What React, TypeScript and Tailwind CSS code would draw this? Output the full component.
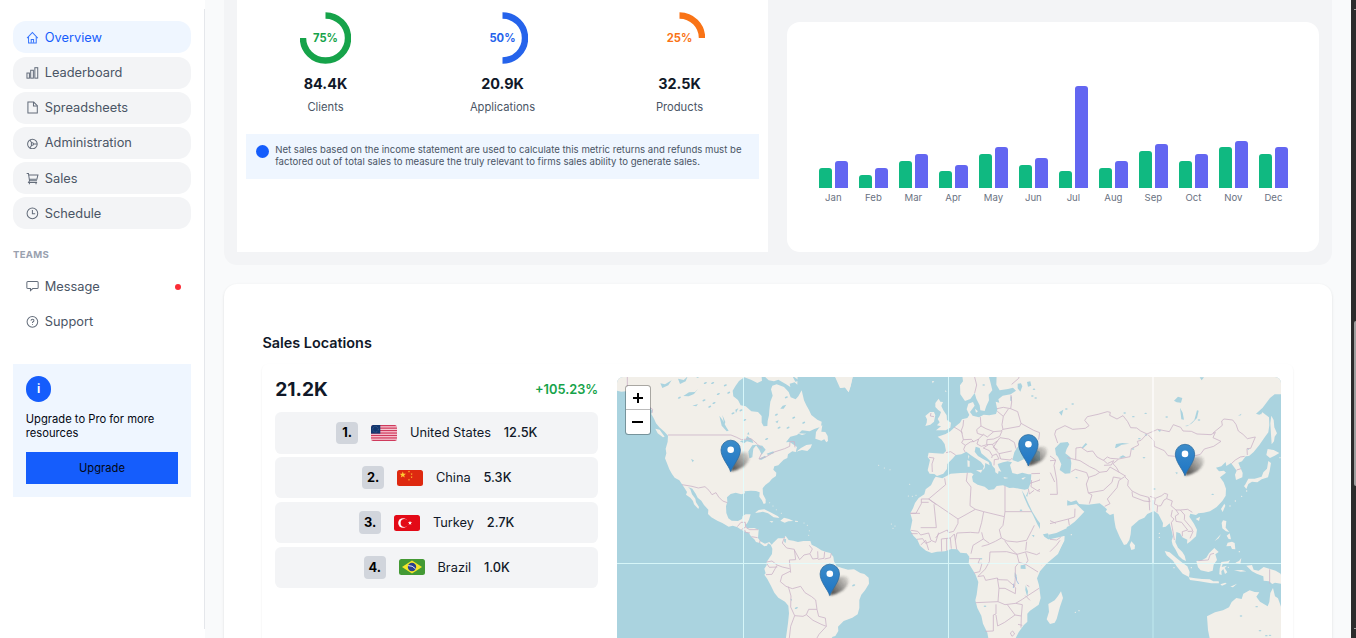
import React from "react";

type IconName = "home" | "bars" | "file" | "admin" | "cart" | "clock" | "message" | "help";

function Icon({ name }: { name: IconName }) {
  const shapes: Record<IconName, React.ReactNode> = {
    home: (
      <>
        <path d="M1 6.6 6 1.3l5 5.3" />
        <path d="M2.4 5.6v5.6h7.2V5.6" />
        <path d="M4.9 11V7.9h2.2V11" />
      </>
    ),
    bars: (
      <>
        <rect x="0.9" y="6.6" width="2.3" height="4.8" />
        <rect x="4.4" y="4" width="2.5" height="7.4" />
        <rect x="8.300" y="1.6" width="2.7" height="9.8" />
      </>
    ),
    file: (
      <>
        <path d="M1.8 1h5.4l3.4 3.4v6.8H1.8z" />
        <path d="M7 1v3.6h3.6" />
      </>
    ),
    admin: (
      <>
        <circle cx="6" cy="6.6" r="4.5" />
        <circle cx="6" cy="6.6" r="1.1" />
        <path d="M7.2 6.6h3.3M5.4 5.6 3.7 2.9M5.4 7.6l-1.7 2.7" />
      </>
    ),
    cart: (
      <>
        <path d="M0.6 1.4h1.7l1 6.9h7" />
        <path d="M2.5 2.8h8.7l-1 4H3.1" />
        <path d="M3.3 8.3 2.4 9.8h8" />
        <path d="M3.2 10.2v1.2M9.4 10.2v1.2" />
      </>
    ),
    clock: (
      <>
        <circle cx="6" cy="6" r="5" />
        <path d="M6 2.8V6.3h2.6" />
      </>
    ),
    message: <path d="M1.8 1.400h8.6q1 0 1 1v4.6q0 1-1 1H6.3L4.2 10V8H1.8q-1 0-1-1V2.400q0-1 1-1z" />,
    help: (
      <>
        <circle cx="6" cy="6.4" r="5" />
        <path d="M4.7 5.4q0-1.4 1.4-1.4t1.3 1.3Q7.4 6.200 6.100 6.700v.7M6.100 8.500v.7" />
      </>
    ),
  };
  return (
    <svg width="12.800" height="12.800" viewBox="0 0 12 12" fill="none" stroke="currentColor" strokeWidth="0.950" className="shrink-0 opacity-85">
      {shapes[name]}
    </svg>
  );
}

const navItems: { label: string; icon: IconName; active?: boolean }[] = [
  { label: "Overview", icon: "home", active: true },
  { label: "Leaderboard", icon: "bars" },
  { label: "Spreadsheets", icon: "file" },
  { label: "Administration", icon: "admin" },
  { label: "Sales", icon: "cart" },
  { label: "Schedule", icon: "clock" },
];

function Sidebar() {
  return (
    <aside className="flex w-[205px] shrink-0 flex-col bg-white py-[9px]">
      <div className="flex h-[621px] flex-col border-r border-gray-200 px-[13px] pt-[12.4px]">
        <nav className="flex flex-col gap-[3.2px]">
          {navItems.map((item) => (
            <a
              key={item.label}
              className={
                item.active
                  ? "flex h-8 items-center gap-[6.2px] rounded-[13px] bg-blue-50 px-[12.800px] text-[12.8px] text-blue-600"
                  : "flex h-8 items-center gap-[6.2px] rounded-[13px] bg-gray-100 px-[12.800px] text-[12.8px] text-gray-600"
              }
            >
              <Icon name={item.icon} />
              {item.label}
            </a>
          ))}
        </nav>
        <h3 className="mt-[19px] text-[9.6px] font-bold leading-[13px] tracking-[0.3px] text-gray-400">TEAMS</h3>
        <div className="mt-[9px] flex flex-col gap-[3.2px] text-[12.8px] text-gray-600">
          <a className="flex h-8 items-center gap-[6.2px] px-[12.800px]">
            <Icon name="message" />
            Message
            <span className="mr-[-3px] ml-auto mt-[1px] size-[6.4px] rounded-full bg-[#fb2c36]" />
          </a>
          <a className="flex h-8 items-center gap-[6.2px] px-[12.800px]">
            <Icon name="help" />
            Support
          </a>
        </div>
        <div className="mt-[26.900px] h-[133px] bg-blue-50 px-[12.800px] pt-[11.800px]">
          <div className="flex size-[25.6px] items-center justify-center rounded-full bg-[#155dfc] text-xs font-bold text-white">i</div>
          <p className="mt-[10px] text-[11.2px] leading-[14px] text-gray-950">Upgrade to Pro for more resources</p>
          <button className="mt-[12.200px] block h-8 w-full bg-[#155dfc] text-[11.2px] text-gray-950">Upgrade</button>
        </div>
      </div>
    </aside>
  );
}

const gauges = [
  { pct: 75, value: "84.4K", label: "Clients", stroke: "#16a34a", text: "text-[#16a34a]" },
  { pct: 50, value: "20.9K", label: "Applications", stroke: "#2563eb", text: "text-[#2563eb]" },
  { pct: 25, value: "32.5K", label: "Products", stroke: "#f97316", text: "text-[#f97316]" },
];

function Gauges() {
  return (
    <section className="w-[531px] bg-white px-[9.200px] pt-3">
      <div className="grid grid-cols-[177px_177px_177px] justify-center">
        {gauges.map((g) => (
          <div key={g.label} className="flex flex-col items-center">
            <div className="relative flex h-[52px] w-[51px] items-center justify-center">
              <svg className="absolute inset-0 size-full" viewBox="0 0 51 52" fill="none">
                <circle cx="25.500" cy="26" r="22.500" stroke={g.stroke} strokeWidth="6.400" pathLength="100" strokeDasharray={`${g.pct} 100`} transform="rotate(-90 25.500 26)" />
              </svg>
              <span className={`text-[11.2px] font-bold ${g.text}`}>{g.pct}%</span>
            </div>
            <div className="mt-[10px] text-[14.4px] font-bold leading-5 text-gray-900">{g.value}</div>
            <div className="mt-[5px] text-[11.2px] leading-4 text-gray-600">{g.label}</div>
          </div>
        ))}
      </div>
      <div className="mt-[19px] flex h-[45px] gap-[6.4px] bg-blue-50 px-[9.6px] pt-[10px]">
        <span className="mt-[1px] size-[13px] shrink-0 rounded-full bg-[#155dfc]" />
        <p className="whitespace-nowrap text-[9.6px] leading-[12px] text-gray-600">
          Net sales based on the income statement are used to calculate this metric returns and refunds must be
          <br />
          factored out of total sales to measure the truly relevant to firms sales ability to generate sales.
        </p>
      </div>
    </section>
  );
}

const months: [string, number, number][] = [
  ["Jan", 6, 8],
  ["Feb", 3.8, 6],
  ["Mar", 8, 10],
  ["Apr", 5, 6.8],
  ["May", 10, 12],
  ["Jun", 6.8, 8.8],
  ["Jul", 5, 30],
  ["Aug", 6, 8],
  ["Sep", 11, 13],
  ["Oct", 8, 10],
  ["Nov", 12, 13.8],
  ["Dec", 10, 12],
];

function BarChart() {
  return (
    <section className="mt-[22px] flex h-[230px] w-[532px] items-start justify-center rounded-[13px] bg-white pl-[0.800px] pt-[46px]">
      {months.map(([month, a, b]) => (
        <div key={month} className="flex w-10 flex-col items-center">
          <div className="flex h-[120px] items-end gap-[3.2px]">
            <div className="w-[12.8px] rounded-t-[3px] bg-[#10b981]" style={{ height: a * 3.4 }} />
            <div className="w-[12.8px] rounded-t-[3px] bg-[#6366f1]" style={{ height: b * 3.4 }} />
          </div>
          <span className="mt-[3px] text-[9.6px] leading-[13px] text-gray-500">{month}</span>
        </div>
      ))}
    </section>
  );
}

function Star({ x, y, r, fill }: { x: number; y: number; r: number; fill: string }) {
  const pts = Array.from({ length: 10 }, (_, i) => {
    const a = (Math.PI / 5) * i - Math.PI / 2;
    const q = i % 2 ? r * 0.4 : r;
    return `${(x + q * Math.cos(a)).toFixed(2)},${(y + q * Math.sin(a)).toFixed(2)}`;
  });
  return <polygon points={pts.join(" ")} fill={fill} />;
}

function Flag({ code }: { code: string }) {
  return (
    <svg width="26" height="16" viewBox="0 0 26 16" className="shrink-0 rounded-[2.500px]">
      {code === "us" && (
        <>
          <rect width="26" height="16" fill="#fbd5de" />
          {[0, 1, 2, 3, 4, 5, 6].map((i) => (
            <rect key={i} y={i * 2.46} width="26" height="1.300" fill="#cf3a5c" />
          ))}
          <rect width="9.300" height="8.600" fill="#12376f" />
          <circle cx="4.500" cy="4.300" r="2.800" fill="none" stroke="#5d76a3" strokeWidth="0.700" strokeDasharray="0.700 0.800" />
        </>
      )}
      {code === "cn" && (
        <>
          <rect width="26" height="16" fill="#de2910" />
          <Star x={5.8} y={4.8} r={3.4} fill="#fc3" />
          <Star x={12} y={1.6} r={1.1} fill="#fc3" />
          <Star x={14.6} y={4} r={1.1} fill="#fc3" />
          <Star x={14.6} y={7.2} r={1.1} fill="#fc3" />
          <Star x={12} y={9.8} r={1.1} fill="#fc3" />
        </>
      )}
      {code === "tr" && (
        <>
          <rect width="26" height="16" fill="#e30a17" />
          <circle cx="9" cy="8" r="4.800" fill="#fff" />
          <circle cx="10.500" cy="8" r="3.900" fill="#e30a17" />
          <Star x={16} y={8} r={2.3} fill="#fff" />
        </>
      )}
      {code === "br" && (
        <>
          <rect width="26" height="16" fill="#439934" />
          <path d="M3 8 13 1.500 23 8l-10 6.500z" fill="#f5e52a" />
          <circle cx="13" cy="8" r="4.200" fill="#2a3f8f" />
          <path d="M9.200 6.600q4.300-.3 7.300 3.200" fill="none" stroke="#fff" strokeWidth="0.900" />
        </>
      )}
    </svg>
  );
}

const countries = [
  { code: "us", name: "United States", value: "12.5K" },
  { code: "cn", name: "China", value: "5.3K" },
  { code: "tr", name: "Turkey", value: "2.7K" },
  { code: "br", name: "Brazil", value: "1.0K" },
];

const land = "#f2efe9";
const sea = "#aad3df";

function Americas() {
  return (
    <g transform="translate(612 370) scale(0.33333)">
      <path
        fill={land}
        d="M10 10V61L28 65 42 64 60 80 95 92 114 112 121 124 118 132 126 146 132 160 142 172 158 186 168 197 167 215 161 236 163 250 159 265 165 280 172 298 180 312 188 323 202 331 211 344 218 355 225 366 222 374 235 383 243 393 246 403 259 417 261 411 252 397 250 386 240 373 235 358 228 351 241 356 251 371 257 383 268 392 276 405 289 419 288 432 298 442 316 452 331 459 350 470 362 467 375 471 389 480 401 486 411 490 418 500 427 508 432 516 444 519 457 529 465 527 468 520 476 524 481 536 480 552 472 564 464 576 464 586 457 596 461 610 457 614 466 627 476 646 487 668 499 683 519 695 529 707 531 730 528 760 521 810H655L662 800 670 798 679 783 678 770 695 753 721 743 737 733 742 714 742 690 748 674 759 661 771 641 770 623 757 612 745 609 726 598 708 599 690 594 674 589 666 574 664 560 655 549 640 545 628 541 613 531 599 524 595 513 574 513 558 516 544 512 530 510 521 498 514 505 498 505 484 518 479 524 472 516 459 521 445 514 438 504 440 479 427 474 405 475 400 465 406 459 411 449 416 433 401 433 392 438 390 447 378 453 359 452 349 445 343 429 342 409 346 395 345 382 356 372 371 368 388 373 399 370 398 364 417 362 432 363 443 367 442 380 450 391 455 402 461 400 461 388 453 373 452 355 460 345 472 336 480 326 492 318 493 308 484 299 487 289 499 286 506 278 515 269 526 264 528 253 541 244 550 246 570 240 586 243 596 233 600 223 583 225 567 234 551 247 555 231 533 216 522 217 535 200 555 195 570 181 593 184 607 177 627 170 629 155 616 149 598 135 591 120 583 106 576 91 569 61 559 79 551 88 536 82 530 66 516 51 494 43 481 47 477 58 482 77 475 95 472 121 471 136 467 153 466 168 455 169 449 158 449 138 438 126 418 124 401 109 386 106 378 90 364 79 362 62 370 49 381 33 397 22 417 29 436 39 450 32 448 10Z"
      />
      <path fill={land} d="M448 10 470 31 486 34 499 29 521 42 535 51 533 41 548 37 556 44 557 10ZM665 10 675 34 684 54 698 52 710 67 716 47 724 10ZM612 186 625 168 631 166 628 185 640 186 647 198 648 213 643 217 637 208 628 212 610 206ZM130 176 143 179 158 200 153 202 137 190ZM428 429 440 420 457 418 478 428 498 439 502 444 485 442 468 430 453 425ZM505 452 516 443 531 447 544 453 529 454 518 458ZM472 453 484 454 480 458ZM549 452 558 453 557 456 549 455ZM556 190 583 191 570 195Z" />
      <g fill={sea}>
        <path d="M383 214 401 209 405 198 421 209 424 219 405 214 396 220ZM412 265 409 244 421 226 434 224 424 236 421 262ZM431 224 451 227 461 239 449 254 442 239ZM440 267 459 257 462 262 447 270ZM464 251 484 244 487 249 468 255ZM322 137 331 149 343 172 350 182 344 184 329 167ZM331 135 340 156 337 166ZM237 267 246 271 242 277ZM145 40 159 43 179 31 169 46 151 54ZM198 26 215 30 227 19 221 34 204 42ZM214 78 231 67 249 66 258 56 246 72 230 79ZM241 107 258 102 253 109ZM370 119 379 115 372 129ZM405 193 410 186 412 194ZM505 116 512 107 523 104 515 116ZM490 155 500 151 496 160ZM516 508 522 507 521 519 517 516ZM535 686 540 688 538 694ZM540 16 562 32 550 35Z" />
        {[[280, 39], [302, 39], [340, 46], [350, 68], [293, 110], [306, 99], [319, 72], [387, 121], [398, 150], [363, 130], [276, 91], [493, 134], [545, 143], [575, 158], [501, 173], [528, 173], [464, 207], [523, 82], [202, 83], [258, 20], [553, 714], [725, 646]].map(([x, y]) => (
          <ellipse key={`${x}-${y}`} cx={x} cy={y} rx="5" ry="2.500" transform={`rotate(-25 ${x} ${y})`} />
        ))}
      </g>
      <g fill={land}>
        {[[473, 398], [483, 408], [493, 419], [508, 430], [586, 466], [592, 482], [590, 496], [576, 459]].map(([x, y]) => (
          <circle key={`${x}-${y}`} cx={x} cy={y} r="1.500" />
        ))}
      </g>
      <g fill="none" stroke="#cdb6c9" strokeWidth="2.500" strokeLinejoin="round">
        <path d="M46 10V64M114 113 122 118 120 129M168 195H357L374 202 388 209 417 206 435 221 449 235M449 250 441 267 463 260 487 246 518 236 533 229 534 215 547 215 549 232M210 344 240 349 259 354 279 350 291 361 300 374 312 368 320 381 332 393 346 398M376 470 387 457 400 457 401 471 388 479M400 471 413 479 438 479M398 480 401 487 414 489M418 500 437 503M443 519 444 511" />
        <path d="M518 501 511 519 524 534 547 538 551 569 532 570 536 608M547 540 563 569 576 555 594 551 601 537 592 526M594 552 602 567 618 565 617 544M618 568 636 565 638 545M638 567 655 563 658 550M464 576 480 573 495 585 511 591 533 596M464 580 472 592 496 591M462 614 480 613 495 586M534 604 510 616 505 635 522 649 541 656 566 649 579 668 599 680 611 690 615 718M529 650 537 678 536 711 548 737 573 739 583 734 590 718 615 718M583 734 603 751 630 764 643 769 640 744 620 739 615 718M548 737 536 769 532 804M643 769 621 793 615 804" />
      </g>
    </g>
  );
}

function EuropeAfrica() {
  return (
    <g transform="translate(830 370) scale(0.33333)">
      <path
        fill={land}
        d="M396 10 399 34 390 46 391 73 405 93 421 87 434 69 439 86 449 106 451 121 464 123 469 108 477 91 476 74 487 61 482 40 476 17V10H500L499 44 509 61 534 57 549 53 558 62 542 73 518 77 505 88 508 98 497 95 502 119 498 132 478 136 461 134 447 142 428 137 420 126 434 107 429 96 415 101 410 118 418 135 412 144 396 148 390 158 378 168 361 184 347 192 323 200 335 209 344 222 348 243 340 251 317 250 296 248 293 261 300 270 293 301 299 311 313 312 321 318 340 311 351 297 352 282 370 263 377 255 394 253 409 245 423 256 441 268 453 276 462 288 457 302 464 294 466 279 479 286 476 276 459 267 444 258 434 245 437 230 449 234 454 250 471 264 484 277 487 287 495 296 496 307 504 312 506 303 514 305 506 291 503 282 519 277 533 274 546 277 540 285 547 309 562 313 577 308 595 313 604 313 602 338 595 356 584 359 568 356 550 353 538 354 519 346 500 348 492 358 476 360 464 350 443 344 429 335 426 320 431 313 423 308 392 309 362 311 337 325 317 320 312 327 303 346 287 358 283 373 266 384 255 399 249 415 241 430 247 451 241 481 250 497 262 509 270 527 288 542 305 549 321 545 345 544 364 537 382 538 391 548 410 550 418 560 416 580 427 598 436 613 445 636 440 674 436 691 442 714 454 737 459 761 472 788 476 810H554L566 787 581 766 592 755 592 731 600 722 626 704 632 684 627 646 621 625 630 604 651 580 684 552 700 515 702 498 687 506 658 509 655 494 679 489 710 475 720 10Z"
      />
      <path fill={land} d="M10 10 23 34 32 54 46 52 56 66 62 48 71 10ZM326 86 316 99 316 111 324 119 333 126 329 137 323 147 329 157 321 166 333 169 318 181 347 181 361 173 363 158 351 150 350 136 340 121 334 108 339 96 331 95ZM300 126 312 126 316 136 312 155 301 164 286 168 290 158 291 148 286 138ZM412 271 419 273 419 290 413 290ZM414 255 418 259 416 268ZM438 301 457 299 453 308ZM520 321 535 324 524 326ZM574 325 588 321 579 329ZM346 60 350 65 346 66ZM306 33 313 34 308 40ZM435 116 444 124 438 128Z" />
      <path fill={sea} d="M547 270 553 247 560 235 576 217 590 224 604 218 610 235 631 246 644 268 611 275 583 267 564 276ZM604 219 625 213 623 231 610 227ZM575 360 586 379 595 400 607 425 623 451 640 472 655 492 658 510 643 500 622 463 609 435 594 408 583 383ZM588 378 595 362 592 380ZM572 586 586 584 587 597 572 596ZM554 607 560 615 559 628 554 620ZM587 646 594 664 592 681 586 660ZM563 41 573 40 577 49 571 65 563 55ZM591 36 601 34 604 47 594 50ZM605 496 613 495 612 502ZM541 79 546 80 545 94 541 92ZM675 227 690 222V266L679 254Z" />
      <g fill={sea}>
        {[[617, 84], [656, 92], [612, 58], [640, 62], [465, 709], [453, 566], [573, 421], [461, 45], [660, 27], [607, 78]].map(([x, y]) => (
          <ellipse key={`${x}-${y}`} cx={x} cy={y} rx="4" ry="2.200" />
        ))}
      </g>
      <g fill={land}>
        {[[146, 286], [163, 294], [180, 299], [239, 343], [235, 378], [247, 379], [258, 376], [184, 462], [195, 468], [189, 475]].map(([x, y]) => (
          <circle key={`${x}-${y}`} cx={x} cy={y} r="1.600" />
        ))}
      </g>
      <path d="M558 620 560 632 566 642M551 641 550 654" stroke="#83aee0" strokeWidth="2" fill="none" />
      <g fill="none" stroke="#cdb6c9" strokeWidth="2.500" strokeLinejoin="round">
        <path d="M434 69 440 45 431 10M570 10 566 25 545 43M543 75 545 96 542 116 520 112 501 116M542 116 563 125 573 160 611 181 629 188 626 209M502 124 520 139 516 164 519 178 569 169 573 160M520 139 535 117M451 141 453 168 468 176 491 185 513 183 519 178M401 150 399 168 394 181 400 209 424 208 431 215 446 207 460 193 472 201 491 185M372 171 392 183 397 190M453 168 440 179 442 190 460 196M348 248 362 245 377 255M400 209 395 218 406 226 401 238 406 247M406 226 421 216 432 214M297 262 312 264 306 282 307 306M446 207 441 222 454 229 470 224 471 209 491 207 509 199 516 183M471 224 488 223 503 212 510 203 536 207 553 217 558 236M474 225 460 234 478 242 487 257 485 264M487 223 498 241 507 251 512 267 541 270 547 264M487 257 499 252 507 267 493 269 492 286M503 212 490 232 503 240M507 251 545 243M303 129 301 138 312 140M630 248 654 256 673 261M650 266 657 280 658 301 636 310 604 311M650 269 667 270 670 285 682 292M658 301 661 320 684 360M636 310 630 330 600 340M605 330 603 350 622 362 647 349 661 320M595 356 598 372 612 361M622 362 656 371 684 368" />
        <path d="M344 325 347 344 296 387 384 447 384 460 371 484 355 488 352 480 326 492 317 504 M296 387H274V401L258 430H241M296 397H275M312 403 319 473H272M296 387 319 404M241 430H270M412 308 409 333 423 351 421 384 420 407 436 418 461 425 523 440 525 425V347M525 425H605M436 418 384 447M461 425 455 457 446 489 421 487 381 489 376 511M455 487 460 507 429 526 423 551M523 440 519 466 508 479 514 504 496 514 474 524 455 529M460 507 478 520M514 504 531 513 561 516 590 511 605 482 613 466M524 512 541 535 561 553 590 545 620 554 652 537 682 518M590 515 587 541M634 554V588M587 547 594 571 587 583 624 606M561 553 567 577 556 591 556 620 554 649 532 630 505 629 502 624 467 631 461 617 443 620M567 577 587 583M418 566H450L444 580 456 580 449 605 432 609M480 546 478 575 466 597 445 618M480 546 530 545 561 553M502 624 507 655 525 655 556 671 557 654 551 648M507 655 504 695 437 698M504 695 525 704 557 700 577 688 590 679 627 655M498 703 498 732 490 735V783L466 784M498 735 503 768 524 757 555 735 532 704M555 735 574 738 577 704 557 700M574 738 573 773M564 763 577 766M541 789 548 783 554 792 546 799ZM243 481 263 484 272 495 296 489 303 511 317 517 326 488M243 491H263M261 508 278 506 287 520 303 514M272 525 287 511 296 540M335 545 334 507 361 504 364 536M350 505V542M361 504 373 492 380 538M590 645 598 650M586 677 600 691" />
      </g>
    </g>
  );
}

function AsiaPacific() {
  return (
    <g transform="translate(1050 370) scale(0.33333)">
      <path
        fill={land}
        d="M-30 10H700V73H674L660 84 638 113 618 131 628 134 637 127 657 142 658 166 655 187 642 205 628 225 611 246 597 258 587 259 576 274 565 278 572 295 578 309 577 322 558 330 555 314 560 302 552 291 543 279 529 288 527 276 514 289 498 293 507 304 522 302 528 308 510 322 521 337 528 356 527 377 517 393 500 411 480 424 461 428 445 430 438 435 421 431 418 440 432 461 441 479 438 499 420 515 411 521 412 509 397 502 390 490 379 486 378 503 376 516 384 533 397 546 404 557 408 573 397 568 386 557 377 539 368 525 365 512 369 500 365 482 359 460 347 470 338 472 339 459 325 432 312 423 292 432 283 443 267 450 244 470 242 493 238 510 230 523 222 525 209 501 197 473 193 451 191 431 180 435 167 425 171 418 159 407 149 400 114 404 87 402 79 391 63 396 39 385 31 370 22 365 35 385 43 399 48 407 70 404 79 402 89 412 103 425 86 443 74 455 57 468 27 482-30 495Z"
      />
      <path fill={land} d="M-30 515 12 505 44 498 43 512 28 541 0 570-30 590ZM33 664 39 684 30 710 20 747 14 758 0 762-10 748-3 725-5 702 14 691 24 678ZM244 514 255 526 254 537 244 540 239 525ZM344 543 359 547 380 565 397 578 412 589 419 606 417 621 398 611 381 590 369 572 350 556ZM416 622 436 625 456 627 479 628 490 634 506 634 507 640 484 640 448 634 420 630ZM439 573 453 572 469 563 477 550 493 534 506 546 496 553 501 570 491 584 488 602 475 606 452 601 444 592ZM514 576 533 574 540 570 535 580 518 582 515 591 531 587 524 594 532 607 525 612 520 597 514 604 515 615 508 613 509 596ZM589 587 606 585 611 599 626 602 641 591 660 597 677 602 692 611 700 643 675 638 667 642 657 634 641 632 640 619 620 611 606 604ZM471 739 495 727 519 721 537 712 545 696 559 684 575 687 580 671 599 661 614 666 628 667 619 680 630 695 653 709 658 696 661 669 669 654 675 679 684 685 693 710 700 810H480L474 780ZM515 459 519 451 529 453 527 473 538 486 528 484 517 475ZM533 518 546 515 554 519 556 538 546 537 542 528 529 529ZM513 417 523 401 526 407 518 426ZM585 345 595 326 614 326 635 320 640 307 651 296 655 273 663 279 659 303 654 322 635 328 622 337 606 335 595 342 589 357 582 348ZM653 237 671 240 688 249 674 257 660 264 649 255ZM664 137 671 150 673 172 681 190 674 200 672 214 665 223 663 193 661 160ZM437 447 450 440 447 453ZM530 497 539 490 543 508 536 507ZM494 513 513 492 506 505ZM556 578 567 573 574 564 571 582ZM552 601 575 600 589 604 572 605ZM511 643 526 638 530 641 516 647ZM541 650 561 641 549 652Z" />
      <path fill={sea} d="M15 235 31 218 53 216 58 223 50 237 46 250 61 262 64 279 61 310 45 311 29 300 34 283 24 261 18 254ZM405 168 418 164 433 150 441 121 446 122 441 144 426 160 411 169ZM195 234 198 222 217 219 238 221 215 224 200 233ZM94 234 107 219 112 223 100 234ZM207 262 219 256 228 261 214 264ZM372 92 384 80 397 84 393 98 380 97ZM390 113 398 128 402 149 394 148ZM27 127 40 119 35 137ZM376 306 384 308 380 313ZM75 322 82 321 82 326ZM564 137 574 131 573 136ZM449 22 462 22 455 31ZM620 132 637 122 634 133ZM323 181 333 179 330 186ZM592 233 598 238 594 240Z" />
      <g fill={sea}>
        {[[49, 117], [68, 102], [250, 140], [287, 130], [288, 195], [268, 206], [249, 237], [224, 129], [488, 373], [313, 357], [282, 263], [350, 141], [447, 150], [573, 738], [620, 710], [630, 782], [649, 797], [660, 796]].map(([x, y]) => (
          <ellipse key={`${x}-${y}`} cx={x} cy={y} rx="4" ry="2" />
        ))}
      </g>
      <g fill={land}>
        {[[328, 490], [328, 502], [64, 494], [76, 727], [87, 722], [540, 408], [556, 393], [575, 379], [590, 363], [362, 580], [372, 593], [424, 593], [690, 263], [568, 545], [535, 592]].map(([x, y]) => (
          <circle key={`${x}-${y}`} cx={x} cy={y} r="2" />
        ))}
      </g>
      <g fill="none" stroke="#cdb6c9" strokeWidth="2.500" strokeLinejoin="round">
        <path d="M23 219 14 193 18 180 45 167 68 178 106 175 117 167 104 151 112 140 144 133 172 125 181 127 179 136 201 147 219 137 233 155 242 173 260 174 272 183 291 192 323 178 358 185 370 164 392 172 399 183 424 184 441 192 483 194 496 187 489 203 513 214 491 229 463 237 451 253 416 262 376 259 354 257 343 242 313 229 312 213 294 194 M291 192 273 211 262 214 266 225 244 236 240 260 206 267 189 281 199 292 208 308M52 263 77 269 78 234 93 232 112 245 128 243 141 261 160 271 172 261 181 265 205 267M77 269 90 272 119 290 136 298 149 307 171 304 180 291 206 306 228 319M64 305 76 298 110 308 116 324 109 342 115 369 126 375 118 401M116 322 137 315 149 307M115 369 160 361 186 337 190 321 212 325M164 409 180 401 172 387 201 353 207 331 224 320 235 331 233 347 246 363 270 375 296 382 300 395 282 393 248 380 246 365M172 281 191 272 184 285 162 286M160 270 171 280M300 379 316 385 335 377 344 370 353 373 350 386 367 393 363 407 378 420 391 420 413 418 427 427M297 383 299 421M316 386 313 402 323 406 321 427M325 408 333 407 342 390 350 386M367 420 363 439 372 447 364 458 369 485 373 510M378 420 386 432 376 438 378 454 395 457 405 470 413 480 397 485 397 499M391 420 404 435 403 449 425 475 429 485 420 505M413 484 427 484M0 258 17 270 12 286 20 330 22 373 0 373M0 272 16 271M1 308 14 336M0 461 55 447 74 441 75 416M18 460 0 452M55 447 58 466M0 508 20 510 32 502M0 545 20 525 30 511M515 153 522 147 548 150 558 163 565 183 579 193 592 206 616 201 602 235 591 236 592 255M489 189 517 166 515 153M544 281 556 270 571 261 584 259M560 300 573 296M445 572 475 570 481 553 492 550M659 598V641" />
      </g>
    </g>
  );
}

const pins: [number, number][] = [
  [1028.4, 466],
  [730.7, 471.6],
  [1185, 475.7],
  [829.8, 595.6],
];

function WorldMap() {
  return (
    <div className="relative h-[275px] w-[664px] shrink-0 overflow-hidden rounded-t-[6px] bg-[#aad3df]">
      <svg width="664" height="275" viewBox="617 377 664 275">
        <defs>
          <linearGradient id="pin" x1="0" y1="0" x2="0" y2="1">
            <stop offset="0" stopColor="#3c8cc9" />
            <stop offset="1" stopColor="#1e75c5" />
          </linearGradient>
          <linearGradient id="fade" x1="0" y1="0.800" x2="1" y2="0">
            <stop offset="0" stopColor="#333" stopOpacity="0.850" />
            <stop offset="1" stopColor="#333" stopOpacity="0.080" />
          </linearGradient>
          <filter id="soft" x="-50%" y="-50%" width="200%" height="200%">
            <feGaussianBlur stdDeviation="1.200" />
          </filter>
        </defs>
        <Americas />
        <EuropeAfrica />
        <AsiaPacific />
        <path d="M743.500 377V652M948.500 377V652M617 563.500H1281" stroke="#e2ffff" strokeWidth="1" opacity="0.800" />
        <path d="M1153 377V563" stroke="#fff" strokeWidth="1.800" opacity="0.650" />
        <path d="M1153 500V652" stroke="#c9f0f5" strokeWidth="1.500" opacity="0.500" />
        {pins.map(([x, y]) => (
          <g key={x} transform={`translate(${x} ${y})`}>
            <path d="M0 0 3-14Q12-22 18-18 21-12 13-5 7-1 0 0z" fill="url(#fade)" filter="url(#soft)" />
            <path d="M0 0C-2-6-9.700-14-9.700-21.700a9.700 9.700 0 0 1 19.400 0C9.700-14 2-6 0 0z" fill="url(#pin)" stroke="#2e6d9f" strokeWidth="0.800" />
            <circle cx="0" cy="-21.800" r="3.300" fill="#fff" />
          </g>
        ))}
      </svg>
      <div className="absolute left-2 top-2 flex h-[50px] w-[26px] flex-col rounded-[3.500px] border border-black/30 bg-white bg-clip-padding">
        <button className="relative flex h-6 items-center justify-center border-b border-[#bbb]">
          <span className="h-[2px] w-[10px] bg-black" />
          <span className="absolute h-[10px] w-[2px] bg-black" />
        </button>
        <button className="flex h-6 items-center justify-center">
          <span className="h-[2px] w-[11px] bg-black" />
        </button>
      </div>
    </div>
  );
}

function SalesLocations() {
  return (
    <section className="mt-[19px] h-[400px] rounded-[13px] bg-white px-[38.400px] pt-[49px] shadow-sm">
      <h2 className="text-[14.4px] font-semibold leading-5 text-gray-900">Sales Locations</h2>
      <div className="mr-[0.600px] mt-[11px] flex h-[320px] justify-between rounded-[6px] pl-[12.800px] pr-[12.200px] pt-[13px] shadow-[0_1px_2px_rgba(0,0,0,0.09)]">
        <div className="w-[323px] shrink-0">
          <div className="flex h-[25px] items-center justify-between">
            <span className="text-[19.2px] font-bold text-gray-900">21.2K</span>
            <span className="text-[12.8px] font-semibold text-[#16a34a]">+105.23%</span>
          </div>
          <ol className="mt-[10px] flex flex-col gap-[3.300px]">
            {countries.map((c, i) => (
              <li key={c.code} className="flex h-[41.600px] items-center justify-center gap-[12.800px] rounded-[6.400px] bg-gray-100 text-[12.8px] text-gray-900">
                <span className="flex size-[22.400px] items-center justify-center rounded-[4px] bg-gray-300 font-bold text-black">{i + 1}.</span>
                <Flag code={c.code} />
                <span>{c.name}</span>
                <span className="font-medium">{c.value}</span>
              </li>
            ))}
          </ol>
        </div>
        <WorldMap />
      </div>
    </section>
  );
}

export default function App() {
  return (
    <div className="flex h-[638px] w-[1356px] overflow-hidden bg-gray-50 font-['Inter',sans-serif]">
      <Sidebar />
      <main className="ml-[19px] w-[1108px] shrink-0">
        <div className="flex h-[265px] justify-between rounded-b-[13px] bg-gray-100 px-[13px] pb-[13px]">
          <Gauges />
          <BarChart />
        </div>
        <SalesLocations />
      </main>
      <div className="ml-auto flex w-[5px] shrink-0 flex-col items-end bg-[#2c2c2c] pt-[9px]">
        <div className="h-px w-[2px] bg-[#9f9f9f]" />
        <div className="mt-[311px] h-[165px] w-[2px] rounded-l-[2px] bg-[#9f9f9f]" />
        <div className="mt-[142px] h-px w-[2px] bg-[#9f9f9f]" />
      </div>
    </div>
  );
}
